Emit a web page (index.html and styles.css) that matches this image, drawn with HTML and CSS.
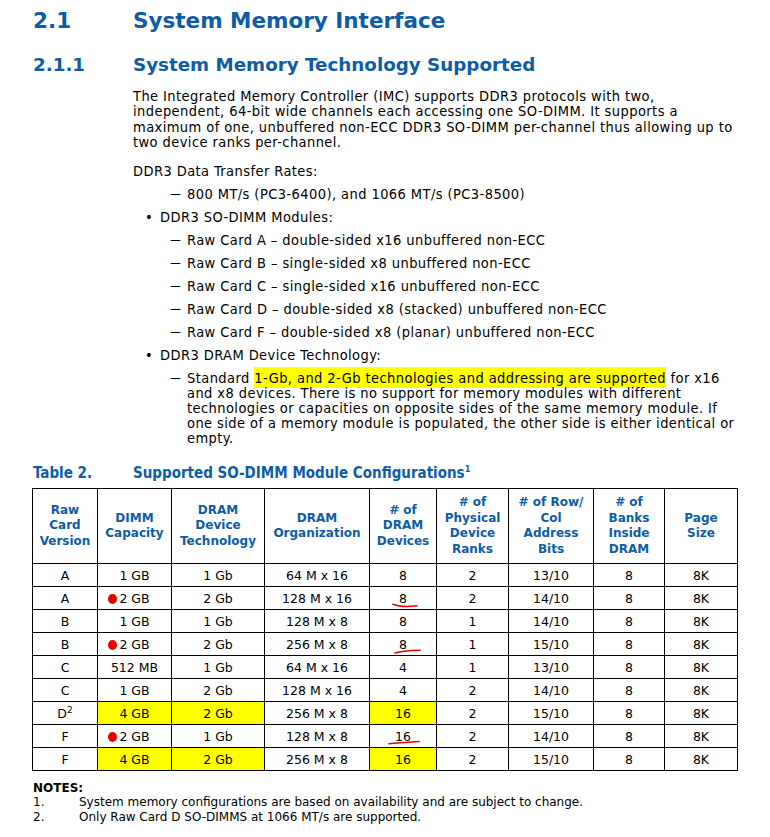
FILE: index.html
```html
<!DOCTYPE html>
<html>
<head>
<meta charset="utf-8">
<link rel="stylesheet" href="styles.css">
</head>
<body>
<div class="page">
  <h1 class="h1"><span class="num">2.1</span><span>System Memory Interface</span></h1>
  <h2 class="h2"><span class="num">2.1.1</span><span>System Memory Technology Supported</span></h2>
  <div class="content">
    <p class="para">The Integrated Memory Controller (IMC) supports DDR3 protocols with two,<br>independent, 64-bit wide channels each accessing one SO-DIMM. It supports a<br>maximum of one, unbuffered non-ECC DDR3 SO-DIMM per-channel thus allowing up to<br>two device ranks per-channel.</p>
    <div class="item top">DDR3 Data Transfer Rates:</div>
    <div class="item sub"><span class="mark">—</span><span>800 MT/s (PC3-6400), and 1066 MT/s (PC3-8500)</span></div>
    <div class="item bul"><span class="mark">•</span><span>DDR3 SO-DIMM Modules:</span></div>
    <div class="item sub"><span class="mark">—</span><span>Raw Card A – double-sided x16 unbuffered non-ECC</span></div>
    <div class="item sub"><span class="mark">—</span><span>Raw Card B – single-sided x8 unbuffered non-ECC</span></div>
    <div class="item sub"><span class="mark">—</span><span>Raw Card C – single-sided x16 unbuffered non-ECC</span></div>
    <div class="item sub"><span class="mark">—</span><span>Raw Card D – double-sided x8 (stacked) unbuffered non-ECC</span></div>
    <div class="item sub"><span class="mark">—</span><span>Raw Card F – double-sided x8 (planar) unbuffered non-ECC</span></div>
    <div class="item bul"><span class="mark">•</span><span>DDR3 DRAM Device Technology:</span></div>
    <div class="item sub"><span class="mark">—</span><span>Standard <span class="hl">1-Gb, and 2-Gb technologies and addressing are supported</span> for x16<br>and x8 devices. There is no support for memory modules with different<br>technologies or capacities on opposite sides of the same memory module. If<br>one side of a memory module is populated, the other side is either identical or<br>empty.</span></div>
  </div>
  <div class="caption"><span class="num">Table 2.</span><span>Supported SO-DIMM Module Configurations<sup>1</sup></span></div>
  <table class="cfg">
    <colgroup>
      <col class="c1"><col class="c2"><col class="c3"><col class="c4"><col class="c5"><col class="c6"><col class="c7"><col class="c8"><col class="c9">
    </colgroup>
    <thead>
      <tr>
        <th>Raw<br>Card<br>Version</th>
        <th>DIMM<br>Capacity</th>
        <th>DRAM<br>Device<br>Technology</th>
        <th>DRAM<br>Organization</th>
        <th># of<br>DRAM<br>Devices</th>
        <th># of<br>Physical<br>Device<br>Ranks</th>
        <th># of Row/<br>Col<br>Address<br>Bits</th>
        <th># of<br>Banks<br>Inside<br>DRAM</th>
        <th>Page<br>Size</th>
      </tr>
    </thead>
    <tbody>
      <tr><td>A</td><td>1 GB</td><td>1 Gb</td><td>64 M x 16</td><td>8</td><td>2</td><td>13/10</td><td>8</td><td>8K</td></tr>
      <tr><td>A</td><td class="ann"><span class="dot"></span>2 GB</td><td>2 Gb</td><td>128 M x 16</td><td class="ann">8<svg class="ul ul1" viewBox="0 0 26 5" width="26" height="5"><path d="M1 1.2 C 6 3.2, 14 4.2, 25 2.8" /></svg></td><td>2</td><td>14/10</td><td>8</td><td>8K</td></tr>
      <tr><td>B</td><td>1 GB</td><td>1 Gb</td><td>128 M x 8</td><td>8</td><td>1</td><td>14/10</td><td>8</td><td>8K</td></tr>
      <tr><td>B</td><td class="ann"><span class="dot"></span>2 GB</td><td>2 Gb</td><td>256 M x 8</td><td class="ann">8<svg class="ul ul2" viewBox="0 0 27 5" width="27" height="5"><path d="M1 4 C 6 2.2, 14 1.5, 26 1.2" /></svg></td><td>1</td><td>15/10</td><td>8</td><td>8K</td></tr>
      <tr><td>C</td><td>512 MB</td><td>1 Gb</td><td>64 M x 16</td><td>4</td><td>1</td><td>13/10</td><td>8</td><td>8K</td></tr>
      <tr><td>C</td><td>1 GB</td><td>2 Gb</td><td>128 M x 16</td><td>4</td><td>2</td><td>14/10</td><td>8</td><td>8K</td></tr>
      <tr><td>D<sup>2</sup></td><td class="yel">4 GB</td><td class="yel">2 Gb</td><td>256 M x 8</td><td class="yel">16</td><td>2</td><td>15/10</td><td>8</td><td>8K</td></tr>
      <tr><td>F</td><td class="ann"><span class="dot"></span>2 GB</td><td>1 Gb</td><td>128 M x 8</td><td class="ann">16<svg class="ul ul3" viewBox="0 0 32 5" width="32" height="5"><path d="M1 3.8 C 8 3, 20 2.2, 31 1.5" /></svg></td><td>2</td><td>14/10</td><td>8</td><td>8K</td></tr>
      <tr><td>F</td><td class="yel">4 GB</td><td class="yel">2 Gb</td><td>256 M x 8</td><td class="yel">16</td><td>2</td><td>15/10</td><td>8</td><td>8K</td></tr>
    </tbody>
  </table>
  <div class="notes">
    <div class="notes-title">NOTES:</div>
    <div class="note"><span class="nnum">1.</span><span>System memory configurations are based on availability and are subject to change.</span></div>
    <div class="note"><span class="nnum">2.</span><span>Only Raw Card D SO-DIMMS at 1066 MT/s are supported.</span></div>
  </div>
</div>
</body>
</html>
```

FILE: styles.css
```css
html, body {
  margin: 0;
  padding: 0;
  background: #ffffff;
}
.page {
  padding: 7px 0 0 33px;
  font-family: "DejaVu Sans Condensed", "DejaVu Sans", sans-serif;
  color: #000;
}
.num {
  display: inline-block;
  width: 100px;
  flex: none;
}
.h1 {
  display: flex;
  margin: 0;
  font-family: "DejaVu Sans", sans-serif;
  font-size: 21.5px;
  line-height: 28px;
  font-weight: bold;
  color: #0d5ca6;
}
.h2 {
  display: flex;
  margin: 19px 0 0 0;
  font-family: "DejaVu Sans", sans-serif;
  font-size: 18.3px;
  line-height: 22px;
  font-weight: bold;
  color: #0d5ca6;
}
.content {
  margin-left: 100px;
  font-size: 14.5px;
  letter-spacing: 0.42px;
  line-height: 15px;
}
.para {
  margin: 13px 0 0 0;
  line-height: 15.3px;
}
.item {
  margin-top: 8px;
  display: flex;
}
.item.top {
  margin-top: 14px;
}
.sub {
  padding-left: 37px;
}
.sub .mark {
  width: 17px;
  flex: none;
  letter-spacing: 0;
  font-size: 12px;
}
.bul {
  padding-left: 12px;
}
.bul .mark {
  width: 15px;
  flex: none;
}
.hl {
  background: #ffff00;
  padding: 3px 0 2px 0;
}
.caption {
  display: flex;
  margin-top: 20px;
  font-size: 15px;
  line-height: 15px;
  font-weight: bold;
  color: #0d5ca6;
}
.caption sup {
  font-size: 9px;
  line-height: 0;
  vertical-align: 6px;
}
.cfg {
  margin-top: 7px;
  margin-left: -1px;
  border-collapse: collapse;
  table-layout: fixed;
  width: 705px;
  font-family: "DejaVu Sans", sans-serif;
}
.c1 { width: 65px; }
.c2 { width: 74px; }
.c3 { width: 93px; }
.c4 { width: 105px; }
.c5 { width: 67px; }
.c6 { width: 72px; }
.c7 { width: 85px; }
.c8 { width: 71px; }
.c9 { width: 73px; }
.cfg th, .cfg td {
  border: 1px solid #000;
  text-align: center;
  padding: 0;
}
.cfg th {
  height: 74px;
  font-size: 12px;
  line-height: 15.5px;
  font-weight: bold;
  color: #0d5ca6;
  vertical-align: middle;
}
.cfg td {
  height: 22px;
  font-size: 12.5px;
  line-height: 15px;
}
.cfg td sup {
  font-size: 9px;
  line-height: 0;
  vertical-align: 5px;
}
.cfg td.yel {
  background: #ffff00;
}
.ann {
  position: relative;
}
.dot {
  position: absolute;
  left: 10px;
  top: 7px;
  width: 9px;
  height: 10px;
  border-radius: 50%;
  background: #e80000;
}
.ul {
  position: absolute;
  overflow: visible;
}
.ul path {
  fill: none;
  stroke: #e80000;
  stroke-width: 1.6;
  stroke-linecap: round;
}
.ul1 { left: 22px; top: 16px; }
.ul2 { left: 24px; top: 16px; }
.ul3 { left: 18px; top: 15px; }
.notes {
  margin-top: 10px;
  font-family: "DejaVu Sans", sans-serif;
  font-size: 12px;
  line-height: 15px;
}
.notes-title {
  font-weight: bold;
  line-height: 14px;
}
.note {
  display: flex;
}
.nnum {
  width: 46px;
  flex: none;
}
```
